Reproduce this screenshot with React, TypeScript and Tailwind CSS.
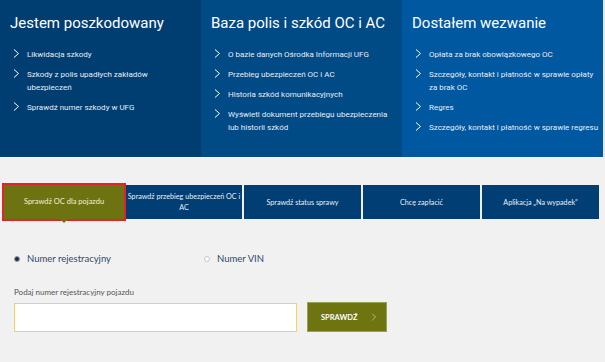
import { ChevronRight } from "lucide-react";

const panels = [
  {
    title: "Jestem poszkodowany",
    bg: "bg-[#003e71]",
    items: [["Likwidacja szkody"], ["Szkody z polis upadłych zakładów", "ubezpieczeń"], ["Sprawdź numer szkody w UFG"]],
  },
  {
    title: "Baza polis i szkód OC i AC",
    bg: "bg-[#004a85]",
    items: [
      ["O bazie danych Ośrodka Informacji UFG"],
      ["Przebieg ubezpieczeń OC i AC"],
      ["Historia szkód komunikacyjnych"],
      ["Wyświetl dokument przebiegu ubezpieczenia", "lub historii szkód"],
    ],
  },
  {
    title: "Dostałem wezwanie",
    bg: "bg-[#0058a0]",
    items: [
      ["Opłata za brak obowiązkowego OC"],
      ["Szczegóły, kontakt i płatność w sprawie opłaty", "za brak OC"],
      ["Regres"],
      ["Szczegóły, kontakt i płatność w sprawie regresu"],
    ],
  },
];

const tabs = [["Sprawdź przebieg ubezpieczeń OC i", "AC"], ["Sprawdź status sprawy"], ["Chcę zapłacić"], ["Aplikacja „Na wypadek”"]];

export default function App() {
  return (
    <div className="w-[605px] h-[362px] overflow-hidden bg-[#f1f1f1] font-['Roboto',sans-serif]">
      {/* Top panels */}
      <div className="flex h-[157px] bg-[#e4e9ee] pr-[2px]">
        {panels.map((p) => (
          <div key={p.title} className={`w-[201px] ${p.bg} pl-[10px] pt-[12px]`}>
            <h2 className="text-[15px] text-white leading-[22px] mb-[14px] whitespace-nowrap">{p.title}</h2>
            <ul className="flex flex-col gap-[7px]">
              {p.items.map((it) => (
                <li key={it[0]} className="flex gap-[7px] text-[8px] leading-[13px] text-[#e6edf5] whitespace-nowrap">
                  <svg className="w-[7px] h-[11px] shrink-0 ml-[3px]" viewBox="0 0 7 11" fill="none" stroke="white" strokeWidth="1">
                    <path d="M1 1.5l4.5 4L1 9.5" />
                  </svg>
                  <span>
                    {it.map((line, i) => (
                      <span key={i} className="block">{line}</span>
                    ))}
                  </span>
                </li>
              ))}
            </ul>
          </div>
        ))}
      </div>
      <div className="h-[1px] bg-[#fafafa]" />

      {/* Tabs */}
      <div className="flex gap-[2px] pl-[4px] pt-[27px]">
        <div className="relative">
          <div className="absolute -inset-[2px] border-2 border-[#e3232a]" />
          <div className="w-[120px] h-[34px] bg-[#6e7312] flex items-center justify-center text-[7.5px] text-[#eef0d8] font-['Lato',sans-serif]">
            Sprawdź OC dla pojazdu
          </div>
          <div className="absolute left-[56px] top-[34px] w-0 h-0 border-l-[4px] border-r-[4px] border-t-[4px] border-l-transparent border-r-transparent border-t-[#6e7312]" />
        </div>
        {tabs.map((t, i) => (
          <div
            key={t[0]}
            className={`${i === 0 ? "w-[116px]" : "w-[117px]"} h-[34px] bg-[#003e73] flex flex-col items-center justify-center text-center text-[7.2px] leading-[11px] text-[#e8eef5] font-['Lato',sans-serif] whitespace-nowrap`}
          >
            {t.map((line) => (
              <span key={line}>{line}</span>
            ))}
          </div>
        ))}
      </div>

      {/* Radios */}
      <div className="flex items-center pl-[14px] pt-[33px] text-[9.5px] text-[#2e4a70] font-['Lato',sans-serif]">
        <div className="flex items-center gap-[7px] w-[190px]">
          <span className="w-[6px] h-[6px] rounded-full bg-[#1f2d3d] border border-[#8da0b8]" />
          <span>Numer rejestracyjny</span>
        </div>
        <div className="flex items-center gap-[7px]">
          <span className="w-[6px] h-[6px] rounded-full bg-white border border-[#c8c8c8]" />
          <span>Numer VIN</span>
        </div>
      </div>

      {/* Form */}
      <div className="pl-[14px] pt-[20px]">
        <div className="text-[8px] text-[#555] mb-[4px] font-['Lato',sans-serif]">Podaj numer rejestracyjny pojazdu</div>
        <div className="flex items-center gap-[10px]">
          <div className="w-[283px] h-[29px] bg-white border border-[#f3d64a]" />
          <button className="w-[80px] h-[30px] bg-[#6e7510] border border-[#9aa055] flex items-center justify-between pl-[13px] pr-[6px] text-white text-[7.5px] font-bold font-['Lato',sans-serif]">
            SPRAWDŹ
            <ChevronRight className="w-[12px] h-[16px] text-[#e6e8cc]" strokeWidth={1.2} />
          </button>
        </div>
      </div>
    </div>
  );
}
